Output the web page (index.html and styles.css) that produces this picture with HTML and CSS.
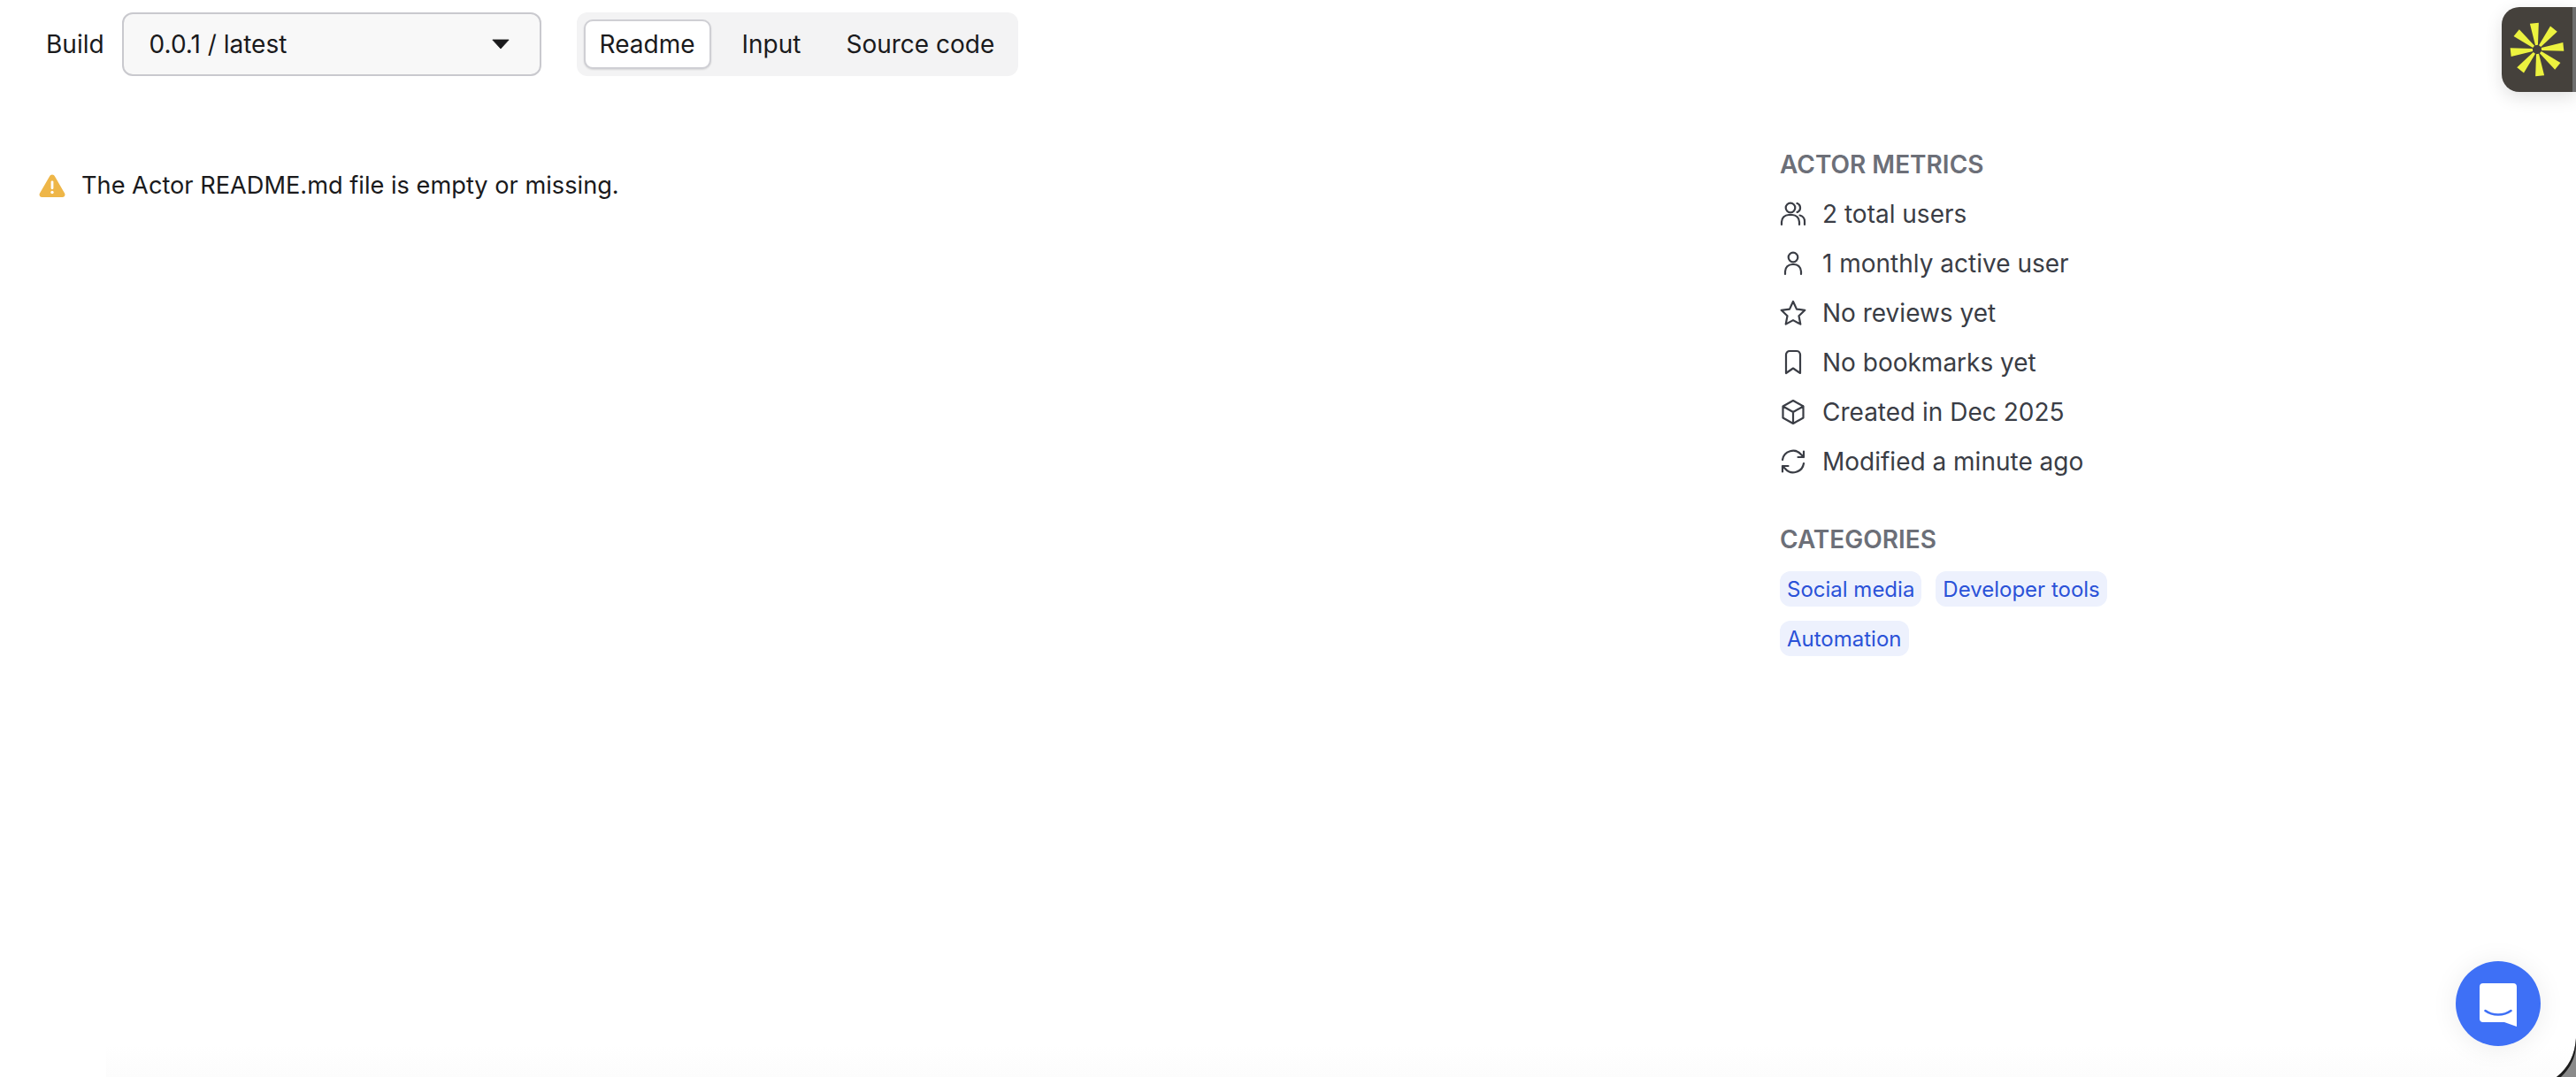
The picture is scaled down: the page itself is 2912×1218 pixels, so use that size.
FILE: index.html
```html
<!DOCTYPE html>
<html lang="en">
<head>
<meta charset="utf-8">
<title>Actor</title>
<link rel="stylesheet" href="styles.css">
</head>
<body>
<div class="page">
  <header class="topbar">
    <span class="build-label">Build</span>
    <div class="select"><span>0.0.1 / latest</span><svg class="caret" viewBox="0 0 24 14"><path d="M1 1h22L12 13z" fill="#1a1a1c" stroke="#1a1a1c" stroke-linejoin="round"/></svg></div>
    <nav class="tabs">
      <span class="tab tab-active">Readme</span>
      <span class="tab">Input</span>
      <span class="tab">Source code</span>
    </nav>
  </header>
  <div class="columns">
    <main class="readme">
      <svg class="warn" viewBox="0 0 30 26"><path d="M15 .5c-1.400 0-2.400.8-3 2L1 21.500C-.2 23.700 1.100 26 3.500 26h23c2.400 0 3.700-2.300 2.500-4.500L18 2.500c-.6-1.200-1.600-2-3-2z" fill="#eeb648"/><rect x="13.600" y="7.500" width="2.800" height="9.500" rx="1.200" fill="#fff"/><circle cx="15" cy="20.500" r="1.700" fill="#fff"/></svg>
      <span class="readme-text">The Actor README.md file is empty or missing.</span>
    </main>
    <aside class="side">
      <h2 class="side-title">ACTOR METRICS</h2>
      <ul class="metrics">
        <li><svg class="ico" viewBox="0 0 30 30"><circle cx="12" cy="8" r="5.300"/><path d="M19.500 3a5.300 5.300 0 0 1 0 10M2 27v-3a8 8 0 0 1 8-8h4a8 8 0 0 1 8 8v3M22.500 16.500a7 7 0 0 1 5.500 7V27"/></svg>2 total users</li>
        <li><svg class="ico" viewBox="0 0 30 30"><circle cx="15" cy="8" r="5.300"/><path d="M6 27v-3a8 8 0 0 1 8-8h2a8 8 0 0 1 8 8v3"/></svg>1 monthly active user</li>
        <li><svg class="ico" viewBox="0 0 30 30"><path d="M15 2l4 8.600 9.300 1.200-6.800 6.500 1.800 9.300L15 23.100l-8.300 4.500 1.800-9.300-6.800-6.500 9.300-1.200z"/></svg>No reviews yet</li>
        <li><svg class="ico" viewBox="0 0 30 30"><path d="M7 27V6a4 4 0 0 1 4-4h8a4 4 0 0 1 4 4v21l-8-5.500z"/></svg>No bookmarks yet</li>
        <li><svg class="ico" viewBox="0 0 30 30"><path d="M15 2l11.500 6.500v13L15 28 3.500 21.500v-13zM3.500 8.500L15 15l11.500-6.500M15 15v13"/></svg>Created in Dec 2025</li>
        <li><svg class="ico" viewBox="0 0 30 30"><path d="M3 13a12 12 0 0 1 21-6l3 3M27 17a12 12 0 0 1-21 6l-3-3M27 3.500V10h-6.500M3 26.500V20h6.500"/></svg>Modified a minute ago</li>
      </ul>
      <h2 class="side-title side-title-cat">CATEGORIES</h2>
      <div class="chips">
        <span class="chip">Social media</span>
        <span class="chip">Developer tools</span>
        <span class="chip">Automation</span>
      </div>
    </aside>
  </div>
  <div class="bottom-fade"></div>
</div>
<div class="logo-tab"><svg class="logo-star" viewBox="-32 -32 64 64">
  <polygon class="ray" points="-5,-30 5,-30 1.500,-5 -1.500,-5" transform="rotate(-6)"/>
  <polygon class="ray" points="-5,-30 5,-30 1.500,-5 -1.500,-5" transform="rotate(39)"/>
  <polygon class="ray" points="-5,-30 5,-30 1.500,-5 -1.500,-5" transform="rotate(84)"/>
  <polygon class="ray" points="-5,-30 5,-30 1.500,-5 -1.500,-5" transform="rotate(129)"/>
  <polygon class="ray" points="-5,-30 5,-30 1.500,-5 -1.500,-5" transform="rotate(174)"/>
  <polygon class="ray" points="-5,-30 5,-30 1.500,-5 -1.500,-5" transform="rotate(219)"/>
  <polygon class="ray" points="-5,-30 5,-30 1.500,-5 -1.500,-5" transform="rotate(264)"/>
  <polygon class="ray" points="-5,-30 5,-30 1.500,-5 -1.500,-5" transform="rotate(309)"/>
</svg></div>
<div class="chat"><svg class="chat-ico" viewBox="0 0 42 49"><path d="M4 0h34a4 4 0 0 1 4 4v45l-14-5H4a4 4 0 0 1-4-4V4a4 4 0 0 1 4-4z" fill="#fff"/><path d="M6.500 31c8 6 21 6 29 0" fill="none" stroke="#3e70f6" stroke-width="2.600" stroke-linecap="round"/></svg></div>
<svg class="corner" viewBox="0 0 24 44"><path d="M24 0C23 18 16 33 2 44H24z" fill="#8a8a8a"/><path d="M24 0C23 18 16 33 2 44h5C18 34 24 20 24 8z" fill="#1c1c1c"/></svg>
</body>
</html>
```
FILE: styles.css
```css
* { box-sizing: border-box; }
html, body { margin: 0; height: 100%; background: #fff; }
body { font-family: Inter, "Liberation Sans", sans-serif; overflow: hidden; }
.page { position: relative; height: 1218px; background: #fff; overflow: hidden; padding: 14px 0 0 52px; }
.topbar { display: flex; align-items: center; height: 72px; font-size: 28px; color: #1a1a1c; }
.build-label { margin-right: 20px; }
.select { width: 474px; height: 72px; padding: 0 34px 0 29px; display: flex; align-items: center; justify-content: space-between; background: #f8f8f8; border: 2px solid #c9c9ce; border-radius: 12px; }
.caret { width: 20px; height: 12px; }
.tabs { display: flex; align-items: center; height: 72px; margin-left: 40px; padding: 0 11px 0 8px; gap: 19px; background: #f3f3f4; border-radius: 12px; }
.tab { padding: 0 16px; height: 56px; display: flex; align-items: center; }
.tab-active { background: #fff; border: 2px solid #cfcfd4; border-radius: 10px; box-shadow: 0 1px 2px rgba(0,0,0,.12); }
.columns { display: flex; margin-left: -8px; }
.readme { width: 1968px; display: flex; align-items: center; align-self: flex-start; gap: 18px; margin-top: 107px; font-size: 27.200px; color: #1a1a1c; }
.warn { width: 30px; height: 26px; flex: none; }
.side { width: 400px; padding-top: 80px; }
.side-title { margin: 0; font-size: 28px; line-height: 40px; font-weight: 600; color: #6c6f78; }
.side-title-cat { margin-top: 40px; }
.metrics { list-style: none; margin: 8px 0 0; padding: 0; }
.metrics li { display: flex; align-items: center; height: 56px; gap: 18px; font-size: 28px; color: #3a3d45; }
.ico { width: 30px; height: 30px; flex: none; fill: none; stroke: #3a3d45; stroke-width: 2.200; stroke-linejoin: round; stroke-linecap: round; }
.chips { display: flex; flex-wrap: wrap; gap: 16px; margin-top: 16px; }
.chip { height: 40px; padding: 0 8px; display: flex; align-items: center; font-size: 24px; color: #2a52d8; background: #edf1fd; border-radius: 12px; }
.bottom-fade { position: absolute; left: 120px; right: 0; bottom: 0; height: 36px; background: linear-gradient(#fff, #fcfcfc); }
.logo-tab { position: fixed; top: 8px; right: 0; width: 84px; height: 96px; background: #45413c; border-radius: 20px 0 0 20px; border-right: 4px solid #6e6e6e; box-shadow: 0 6px 20px rgba(0,0,0,.12); display: flex; align-items: center; padding-left: 8px; }
.logo-star { width: 64px; height: 64px; }
.ray { fill: #ecf23f; }
.chat { position: fixed; left: 2776px; top: 1087px; width: 96px; height: 96px; border-radius: 50%; background: #3e70f6; box-shadow: 0 2px 30px rgba(0,0,0,.08); display: flex; align-items: center; justify-content: center; }
.chat-ico { width: 42px; height: 49px; margin-top: 2px; }
.corner { position: fixed; right: 0; bottom: 0; width: 24px; height: 44px; }
```
